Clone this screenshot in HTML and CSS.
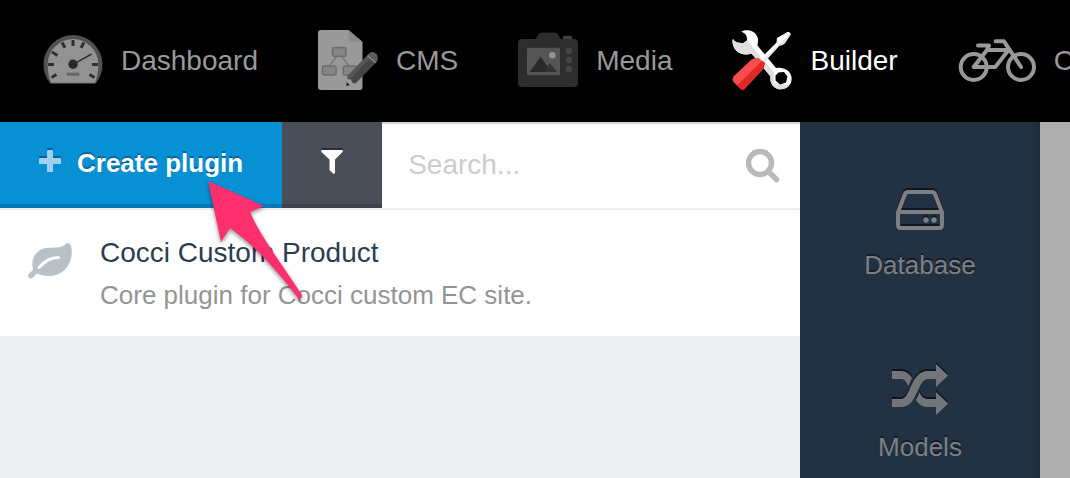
FILE: index.html
```html
<!DOCTYPE html>
<html lang="en">
<head>
<meta charset="utf-8">
<meta name="viewport" content="width=device-width, initial-scale=1">
<title>Builder</title>
<link rel="stylesheet" href="styles.css">
</head>
<body class="app">
<nav class="topnav">
  <a class="topnav-item" href="#dashboard">
    <svg class="topnav-icon" viewBox="0 0 60 60" aria-hidden="true">
      <path d="M7.500 53.700A29.500 29.500 0 1 1 52.500 53.700Z" fill="#515151"/>
      <path d="M8 52.700Q4.700 45 4.700 34.300A25.300 25.300 0 0 1 55.300 34.300Q55.300 45 52 52.700Z" fill="#929292"/>
      <g stroke="#303030" stroke-width="3">
        <path d="M30 10v6M19 12.500l3 5.300M41 12.500l-3 5.300M9 22l5.400 3.500M5 34.500h6M49 34.500h6M8.500 47.500l5-3M51.500 47.500l-5-3"/>
        <path d="M30 34.300L48.700 24" stroke-width="1.500"/>
      </g>
      <circle cx="30" cy="34.300" r="4.700" fill="#292929"/>
      <path d="M23.700 42.700h12.600v3H23.700z" fill="#666"/>
    </svg>
    <span class="topnav-label">Dashboard</span>
  </a>
  <a class="topnav-item" href="#cms">
    <svg class="topnav-icon" viewBox="0 0 60 60" aria-hidden="true">
      <path d="M3 0H30.500L44.500 12V57a3 3 0 0 1-3 3H3a3 3 0 0 1-3-3V3a3 3 0 0 1 3-3Z" fill="#999"/>
      <path d="M30.500 0L44.500 12H33a2.500 2.500 0 0 1-2.500-2.500Z" fill="#8b8b8b"/>
      <path d="M19 26L11 36M23.500 26L31 36" stroke="#777" stroke-width="1.400"/>
      <g fill="#858585" stroke="#6e6e6e" stroke-width="1.500">
        <rect x="14.500" y="17.500" width="13.500" height="8.800" rx="1.500"/>
        <rect x="4.500" y="36" width="13.500" height="9" rx="1.500"/>
        <rect x="25.200" y="36" width="13.500" height="9" rx="1.500"/>
      </g>
      <path d="M28.200 56L29.500 46L37.500 53.500Z" fill="#9c9c9c"/>
      <path d="M28.200 56l.5-4 3.300 3Z" fill="#222"/>
      <path d="M29.500 46L48.800 26L57 33.500L37.500 53.500L34.500 53L33 49.500L29.500 49Z" fill="#464646"/>
      <path d="M29.500 46L48.800 26L51.500 28.500L32.500 49Z" fill="#555"/>
      <path d="M48.800 26L50 24.500L58.500 32L57 33.500Z" fill="#858585"/>
      <path d="M50 24.500C52 22 54.500 21 57.300 23C60.500 25.500 60.300 29.500 58.500 32Z" fill="#5c5c5c"/>
    </svg>
    <span class="topnav-label">CMS</span>
  </a>
  <a class="topnav-item" href="#media">
    <svg class="topnav-icon" viewBox="0 0 60 60" aria-hidden="true">
      <rect x="45" y="5.700" width="9" height="6" rx="1.500" fill="#414141"/>
      <path d="M4 9H17.500L20.500 4.500Q21.500 2.700 23.500 2.700H37Q39 2.700 40 4.500L42.500 9H56a4 4 0 0 1 4 4V53a4 4 0 0 1-4 4H4a4 4 0 0 1-4-4V13a4 4 0 0 1 4-4Z" fill="#2d2d2d"/>
      <rect x="9" y="17.700" width="33" height="27.500" rx="1" fill="#555"/>
      <circle cx="34.300" cy="25.300" r="3.300" fill="#939393"/>
      <path d="M11.700 42L22.700 26.700L33 42Z" fill="#292929"/>
      <path d="M26 42L31.700 33.300L39.300 42Z" fill="#333"/>
      <g fill="#454545"><circle cx="51" cy="21" r="3.200"/><circle cx="51" cy="30" r="3.200"/><circle cx="51" cy="39" r="3.200"/></g>
    </svg>
    <span class="topnav-label">Media</span>
  </a>
  <a class="topnav-item topnav-item-active" href="#builder" aria-current="page">
    <svg class="topnav-icon" viewBox="0 0 60 60" aria-hidden="true">
      <path d="M9.300 1.500C15 -1.500 24 .5 25.800 8C26.500 11 25.500 13 25.500 15.500L44 38C51 36.500 58.500 40 59.500 47C60.500 54 55.500 59.300 49 59.300C42 59.300 37.500 53.500 38.500 46.500L19.500 23.500C10 27 1 21 .5 12Q.4 10 1 9Q2.500 12 5.300 12.500L11 13.300L15 10.500L14.700 6.500Q13 3 9.300 1.500Z" fill="#fff"/>
      <path d="M1 9Q2.500 12 5.300 12.500L11 13.300L15 10.500L42 42.500L42 53L56.800 55.500C54.800 58 52 59.300 49 59.300C42 59.300 37.500 53.500 38.500 46.500L19.500 23.500C10 27 1 21 .5 12Q.4 10 1 9Z" fill="#dedfe1"/>
      <path d="M46.500 42.500L52 42L55.500 46.500L54 52.500L48 54.500L43.500 50.500L43.500 45.500Z" fill="#000"/>
      <path d="M28 29L44.500 12.500L45 8L55.500 2Q58 1.500 58.700 4L53 13Q51 15.500 47.500 15.500L32 32.500Z" fill="#fff"/>
      <path d="M30 31L58.500 3.500V5L53 13Q51 15.500 47.500 15.500L32 32.500Z" fill="#e1e2e4"/>
      <path d="M26.500 28L33 33L31.500 38.500L13 58.500Q10.500 61 8 58.500L1.500 52Q-.5 49 2 46L19.500 29.500Q22 27.500 26.500 28Z" fill="#fc4b4c"/>
      <path d="M30 31L33 33L31.500 38.500L13 58.500Q10.500 61 8 58.500L5 55.500Z" fill="#df2927"/>
    </svg>
    <span class="topnav-label">Builder</span>
  </a>
  <a class="topnav-item" href="#commerce">
    <svg class="topnav-icon topnav-icon-wide" viewBox="0 0 78 60" fill="none" stroke="#999" stroke-width="4" stroke-linecap="round" stroke-linejoin="round" aria-hidden="true">
      <circle cx="15.700" cy="37" r="13"/><circle cx="63" cy="37" r="13"/>
      <path d="M20 15.500H31L29 20L15.700 37H37.300L50.500 20H29M37.500 11.300H46L63 37"/>
    </svg>
    <span class="topnav-label">C</span>
  </a>
</nav>
<div class="workspace">
  <main class="plugins">
    <div class="toolbar">
      <button class="create" type="button">
        <svg class="create-icon" viewBox="0 0 22 22" aria-hidden="true"><path d="M9 0h4a1 1 0 0 1 1 1v7h7a1 1 0 0 1 1 1v4a1 1 0 0 1-1 1h-7v7a1 1 0 0 1-1 1H9a1 1 0 0 1-1-1v-7H1a1 1 0 0 1-1-1V9a1 1 0 0 1 1-1h7V1a1 1 0 0 1 1-1Z" fill="#a0d0ef"/></svg>
        <span class="create-label">Create plugin</span>
      </button>
      <button class="filter" type="button" aria-label="Filter">
        <svg class="filter-icon" viewBox="0 0 22 24" aria-hidden="true"><path d="M1 0H21Q22.500 1 21.500 2L14 9.500V22.500Q13.500 24.500 12 23.500L8.500 20V9.500L.5 2Q-.5 1 1 0Z" fill="#fff"/></svg>
      </button>
      <label class="search">
        <input class="search-input" type="text" placeholder="Search..." aria-label="Search">
        <svg class="search-icon" viewBox="0 0 34 34" fill="none" stroke="#b9b9b9" aria-hidden="true"><circle cx="14" cy="14" r="11.500" stroke-width="5.500"/><path d="M23 23L30.500 30.500" stroke-width="5.500" stroke-linecap="round"/></svg>
      </label>
    </div>
    <a class="plugin" href="#cocci">
      <svg class="plugin-icon" viewBox="0 0 44 36" aria-hidden="true">
        <path d="M40 0C44 1 44 7 43.500 13C42 25 32 33.500 20 33C15 32.800 11 31.500 9 30.500C7 31 6 35 3 35.500C0 35.500-.5 32.500 1 30.500C2.500 28.500 5 28 5 26C2 15 9 6 19 5C26 4 33 6 38 1Q39 0 40 0Z" fill="#b8c1c5"/>
        <path d="M11 24.500C17 18 22 14.500 30.500 14.500" fill="none" stroke="#fff" stroke-width="3" stroke-linecap="round"/>
      </svg>
      <span class="plugin-text"><span class="plugin-name">Cocci Custom Product</span><span class="plugin-desc">Core plugin for Cocci custom EC site.</span></span>
    </a>
    <svg class="pointer" viewBox="0 0 110 130" aria-hidden="true"><path d="M8 6L64 31L50 37C59 59 83 91 102 120Q102 125 98 123C76 94 53 69 30 53L21 67Z" fill="#ff2f6d"/></svg>
  </main>
  <nav class="rail">
    <a class="rail-item" href="#database">
      <svg class="rail-icon" viewBox="0 0 56 60" aria-hidden="true">
        <g fill="none" stroke="#7d8083" stroke-width="4" stroke-linejoin="round"><path d="M6 32L13 14Q14 12 16 12H40Q42 12 43 14L50 32V45Q50 48 47 48H9Q6 48 6 45ZM6 32H50"/></g>
        <circle cx="34" cy="40" r="2.700" fill="#7d8083"/><circle cx="42" cy="40" r="2.700" fill="#7d8083"/>
      </svg>
      <span>Database</span>
    </a>
    <a class="rail-item" href="#models">
      <svg class="rail-icon" viewBox="0 0 56 60" aria-hidden="true">
        <g fill="#737679"><path d="M0 9H9C14 9 17.500 12 20 16C18.500 19 17.500 21 16.500 24C14 19.500 12.500 17 9 17H0Z"/><path d="M27.500 30C29.500 35 32 37 36 37H44V30L56 41.500L44 53V45H36C30 45 26.500 42 24 38Q26 34 27.500 30Z"/><path d="M0 37H9C19 37 18 9 36 9H44V2L56 13.500L44 25V17H36C25 17 26 45 9 45H0Z"/></g>
      </svg>
      <span>Models</span>
    </a>
  </nav>
  <div class="canvas"></div>
</div>
</body>
</html>
```
FILE: styles.css
```css
* { box-sizing: border-box; }

.app {
  margin: 0;
  min-height: 100vh;
  display: flex;
  flex-direction: column;
  overflow: hidden;
  font-family: "Liberation Sans", Arial, sans-serif;
  font-size: 28px;
  line-height: 32px;
}

a { color: inherit; text-decoration: none; }
svg { display: block; flex: none; }

.topnav {
  display: flex;
  gap: 60px;
  padding: 30px 0 32px 43px;
  overflow: hidden;
  background: #000;
  color: #999;
}
.topnav-item { display: flex; flex: none; align-items: center; gap: 18px; }
.topnav-item-active { color: #fff; }
.topnav-label { padding-top: 2px; }
.topnav-icon { width: 60px; height: 60px; overflow: visible; }
.topnav-icon-wide { width: 78px; }

.workspace {
  flex: 1;
  display: grid;
  grid-template-columns: minmax(0, 800px) 240px minmax(0, 1fr);
}

.plugins { position: relative; background: #ebeff0; }
.toolbar { display: flex; border-bottom: 2px solid #ebeff0; }
.create,
.filter {
  display: flex;
  align-items: center;
  border: 0;
  border-radius: 0;
  height: 86px;
  color: #fff;
}
.create {
  gap: 16px;
  padding: 0 39px 4px;
  background: #0890d5;
  border-bottom: 4px solid #077ab5;
  font: bold 26px/32px "Liberation Sans", Arial, sans-serif;
  text-shadow: 0 -2px 0 #06659a;
}
.create-label { padding-top: 4px; }
.create-icon { width: 22px; height: 22px; filter: drop-shadow(0 -2px 0 #06659a); }
.filter {
  width: 100px;
  justify-content: center;
  padding: 0 0 2px;
  background: #494e58;
  border-bottom: 4px solid #3f424b;
}
.filter-icon { width: 22px; height: 24px; filter: drop-shadow(0 -2px 0 #2c2f36); }

.search {
  flex: 1;
  min-width: 0;
  display: flex;
  align-items: center;
  padding: 0 20px 0 26px;
  background: #fff;
  border-top: 2px solid #d0d7d9;
}
.search-input {
  flex: 1;
  min-width: 0;
  padding: 0 0 2px;
  border: 0;
  outline: 0;
  background: none;
  font: 28px/32px "Liberation Sans", Arial, sans-serif;
}
.search-input::placeholder { color: #ccc; opacity: 1; }
.search-icon { width: 34px; height: 34px; }

.plugin {
  display: flex;
  align-items: flex-start;
  gap: 28px;
  padding: 27px 28px 25px;
  background: #fff;
}
.plugin-icon { width: 44px; height: 36px; margin-top: 6px; }
.plugin-text { display: flex; flex-direction: column; gap: 10px; }
.plugin-name { color: #2b3e50; }
.plugin-desc { color: #949494; font-size: 26px; }

.pointer {
  position: absolute;
  left: 200px;
  top: 53px;
  width: 110px;
  height: 130px;
  filter: drop-shadow(0 2px 2px rgba(0, 0, 0, 0.45));
  pointer-events: none;
}

.rail {
  background: linear-gradient(to left, #202c3c, #233243 14px);
  color: #7d8083;
  font-size: 26px;
  text-shadow: 0 -2px 0 #141c28;
}
.rail-item {
  display: flex;
  flex-direction: column;
  align-items: center;
  gap: 9px;
  padding: 58px 0 23px;
}
.rail-icon { width: 56px; height: 60px; filter: drop-shadow(0 -2px 0 #111722); }

.canvas { background: #aeaeae; }
```
